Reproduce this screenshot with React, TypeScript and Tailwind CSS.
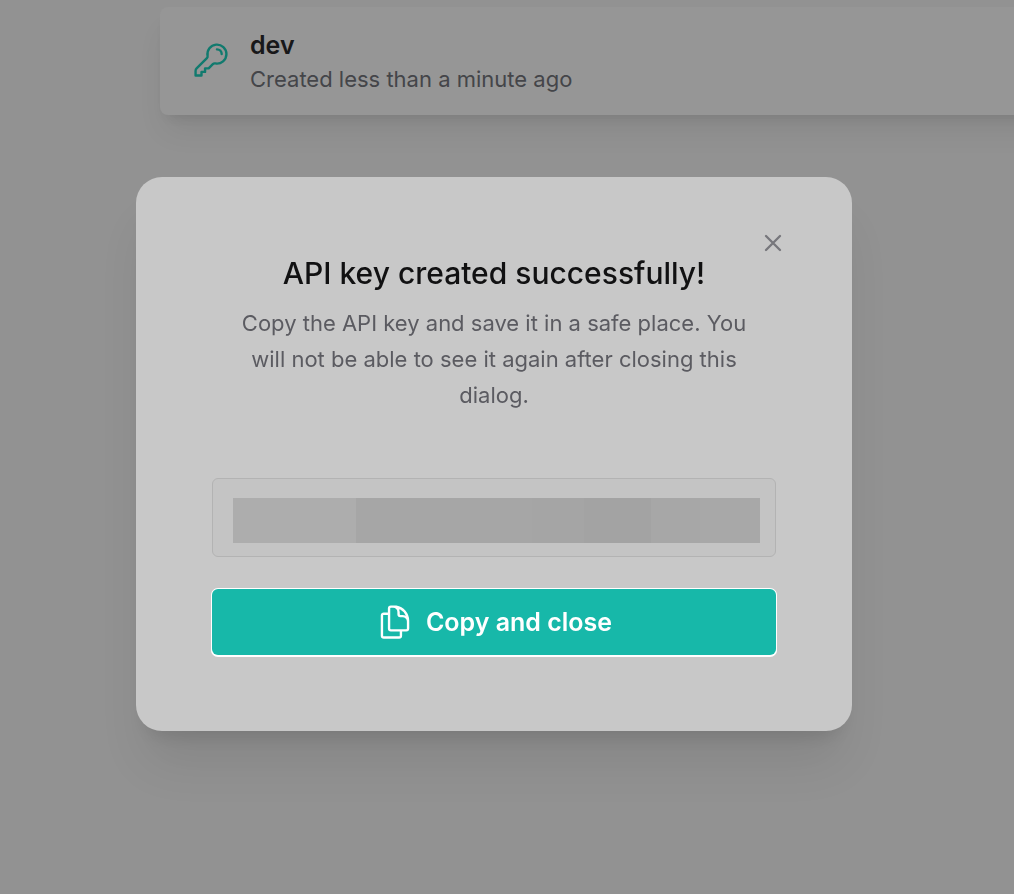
import { useState } from "react";
import {
  HiOutlineDocumentDuplicate,
  HiOutlineKey,
  HiOutlineXMark,
} from "react-icons/hi2";

const KeyCard = ({ name, created }: { name: string; created: string }) => {
  return (
    <div className="flex items-center gap-5 h-[108px] -mr-20 rounded-lg bg-[#969696] pl-8 pb-0.5 shadow-[0_20px_30px_-6px_rgba(0,0,0,0.08),0_8px_12px_-8px_rgba(0,0,0,0.12)]">
      <HiOutlineKey className="w-[38px] h-[38px] text-[#117a6e] shrink-0" />
      <div className="pt-0.5">
        <h3 className="text-[25px] leading-9 font-semibold text-[#18181a]">
          {name}
        </h3>
        <p className="text-[22px] leading-8 text-[#444549]">{created}</p>
      </div>
    </div>
  );
};

const MaskedKey = () => {
  return (
    <div
      role="img"
      aria-label="API key"
      className="mt-[65px] h-[79px] rounded-md border border-[#b3b3b3] bg-[#c4c4c4] pl-5 pr-[15px] pt-[19px]"
    >
      <div className="h-[45px] flex">
        <div className="grow-[123] bg-[#adadad]" />
        <div className="grow-[176] bg-[#a6a6a6]" />
        <div className="grow-[52] bg-[#a5a5a5]" />
        <div className="grow-[67] bg-[#a3a3a3]" />
        <div className="grow-[49] bg-[#a7a7a7]" />
        <div className="grow-[60] bg-[#a8a8a8]" />
      </div>
    </div>
  );
};

export default function App() {
  const [open, setOpen] = useState(true);

  return (
    <div className="min-h-screen overflow-hidden bg-[#929292] font-['Inter',sans-serif]">
      <main className="pl-40 pt-[7px]">
        <KeyCard name="dev" created="Created less than a minute ago" />
      </main>

      {open && (
        <div className="fixed inset-0 overflow-auto pt-[177px] pl-[136px] pr-[162px]">
          <div
            role="dialog"
            aria-labelledby="dialog-title"
            className="relative rounded-[26px] bg-[#c8c8c8] p-[76px] shadow-[0_40px_50px_-10px_rgba(0,0,0,0.09),0_16px_20px_-12px_rgba(0,0,0,0.12)]"
          >
            <button
              type="button"
              aria-label="Close"
              className="absolute top-[52px] right-[65px] text-[#77777c]"
              onClick={() => setOpen(false)}
            >
              <HiOutlineXMark className="w-7 h-7 stroke-2" />
            </button>
            <h2
              id="dialog-title"
              className="text-[30px] leading-10 font-medium text-center text-[#111112]"
            >
              API key created successfully!
            </h2>
            <p className="mt-3 px-6 text-[22px] leading-9 text-center text-[#5b5b61]">
              Copy the API key and save it in a safe place. You will not be able
              to see it again after closing this dialog.
            </p>
            <MaskedKey />
            <button
              type="button"
              className="mt-8 w-full h-[66px] rounded-md bg-[#17b8a9] shadow-[0_0_0_1px_#fff,0_1px_0_1px_#fff] flex items-center justify-center gap-3 text-[25px] leading-9 font-semibold text-white"
              onClick={() => setOpen(false)}
            >
              <HiOutlineDocumentDuplicate className="w-[38px] h-[38px]" />
              Copy and close
            </button>
          </div>
        </div>
      )}
    </div>
  );
}
